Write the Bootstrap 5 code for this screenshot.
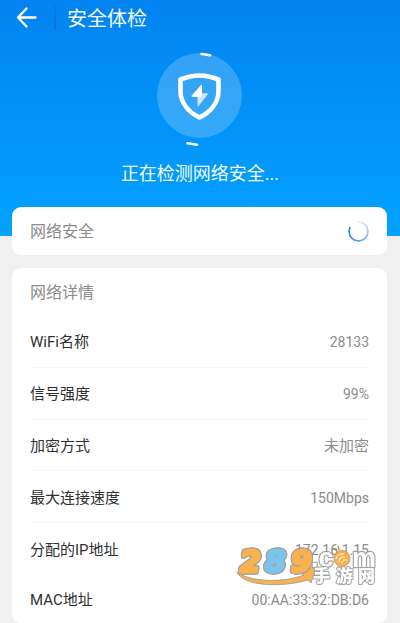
<!DOCTYPE html>
<html lang="zh-CN">
<head>
<meta charset="utf-8">
<meta name="viewport" content="width=device-width, initial-scale=1">
<title>安全体检</title>
<link href="https://cdn.jsdelivr.net/npm/bootstrap@5.3.0/dist/css/bootstrap.min.css" rel="stylesheet">
<style>
  body { font-family: Roboto, "Noto Sans CJK SC", sans-serif; background: #f0f0f0; font-size: 15px; line-height: 20px; color: #303030; }
  .hero { background: linear-gradient(#0283f1, #02a2ff); color: #f2fbff; height: 236px; }
  .topbar { height: 36px; padding-left: 16px; }
  .topbar .split { width: 2px; height: 24px; background: #0878dc; margin: 0 11px 0 17px; }
  .topbar h1 { font-size: 20px; line-height: 28px; font-weight: 400; padding-top: 2px; }
  .status { font-size: 18px; line-height: 28px; }
  .panels { padding: 0 13px 0 12px; margin-top: -29px; gap: 13px; }
  .panel { background: #fff; border-radius: 9px; padding: 0 18px; }
  .panel-title { font-size: 16px; line-height: 24px; font-weight: 400; color: #8c8c8c; height: 48px; padding-top: 2px; }
  .line { border-bottom: 1px solid #f6f6f6; padding-top: 2px; }
  .line dt { font-weight: 400; }
  .line dd { color: #8c8c8c; font-size: 14px; }
  .line dd.cn { font-size: 15px; }
  .plain { border-bottom-color: transparent; }
  .end { height: 48px; border: 0; }
  .ring { width: 21px; height: 21px; border-radius: 50%;
    background: conic-gradient(#e6f1fc 0deg, #a9cff6 80deg, #5ca2e8 180deg, #2f80d4 295deg, transparent 300deg);
    -webkit-mask: radial-gradient(circle, transparent 8px, #000 9px); mask: radial-gradient(circle, transparent 8px, #000 9px); }
  .stamp { right: 22px; bottom: 37px; pointer-events: none; overflow: visible; opacity: .9; }
</style>
<script src="https://cdn.jsdelivr.net/npm/bootstrap@5.3.0/dist/js/bootstrap.bundle.min.js"></script>
</head>
<body>
<div class="d-flex flex-column min-vh-100 position-relative">
  <header class="hero flex-shrink-0">
    <div class="topbar d-flex align-items-center">
      <button type="button" class="btn p-0 border-0 d-flex" aria-label="返回">
        <svg width="21" height="22" viewBox="0 0 21 22" fill="none" stroke="#fff" stroke-width="2.300" stroke-linecap="round" stroke-linejoin="round"><path d="M10.500 1.500 L2 10.500 L10.500 19.500 M2.500 10.500 H19.500"/></svg>
      </button>
      <span class="split"></span>
      <h1 class="m-0">安全体检</h1>
    </div>
    <div class="text-center">
      <svg class="d-block mx-auto" width="120" height="124" viewBox="0 0 120 124" fill="none" aria-hidden="true">
        <circle cx="59.500" cy="59.500" r="42.500" fill="#fff" fill-opacity=".2"/>
        <path d="M59.500 39.500 C66.500 39.500 72 41 78.500 43.500 V55 C78.500 67.500 69.500 76.500 59.500 81.500 C49.500 76.500 40.500 67.500 40.500 55 V43.500 C47 41 52.500 39.500 59.500 39.500 Z" stroke="#fff" stroke-width="4.600" stroke-linejoin="round"/>
        <path d="M61.500 49 L52 59.800 Q51.600 60.500 52.500 60.500 H61.500 Z" fill="#fff" stroke="#fff" stroke-linejoin="round"/>
        <path d="M57.500 61 V69.500 Q57.500 71 58.700 69.800 L67.700 58.400 Q68.300 57.300 67 57.300 H62 V61 Z" fill="#cfe7ff"/>
        <path d="M61.500 18 L70 19.200 M47.500 107.300 L57 108.800" stroke="#fff" stroke-width="2.600" stroke-linecap="round"/>
      </svg>
      <p class="status m-0">正在检测网络安全...</p>
    </div>
  </header>

  <main class="panels d-flex flex-column flex-grow-1">
    <section class="panel d-flex align-items-center justify-content-between">
      <h2 class="panel-title m-0 d-flex align-items-center">网络安全</h2>
      <span class="ring" role="status" aria-label="检测中"></span>
    </section>
    <section class="panel d-flex flex-column flex-grow-1">
      <h2 class="panel-title m-0 d-flex align-items-center">网络详情</h2>
      <dl class="m-0 d-flex flex-column flex-grow-1">
        <div class="line d-flex flex-fill align-items-center justify-content-between"><dt>WiFi名称</dt><dd class="m-0">28133</dd></div>
        <div class="line d-flex flex-fill align-items-center justify-content-between"><dt>信号强度</dt><dd class="m-0">99%</dd></div>
        <div class="line d-flex flex-fill align-items-center justify-content-between"><dt>加密方式</dt><dd class="m-0 cn">未加密</dd></div>
        <div class="line d-flex flex-fill align-items-center justify-content-between"><dt>最大连接速度</dt><dd class="m-0">150Mbps</dd></div>
        <div class="line plain d-flex flex-fill align-items-center justify-content-between"><dt>分配的IP地址</dt><dd class="m-0">172.16.1.15</dd></div>
        <div class="line end d-flex align-items-center justify-content-between"><dt>MAC地址</dt><dd class="m-0">00:AA:33:32:DB:D6</dd></div>
      </dl>
    </section>
  </main>

  <svg class="stamp position-absolute" width="144" height="42" viewBox="0 0 144 42" aria-label="289.com 手游网">
    <g stroke-linejoin="round">
      <path d="M3 28 C14 37 46 40 70 31 L66 29 L83 21 L77 39 L74 36 C46 44 9 42 3 28 Z" fill="#fbaa3a" stroke="#999" stroke-width="1"/>
      <g font-family="DejaVu Sans" font-weight="700" font-style="oblique" font-size="30" stroke-width="3" style="filter: drop-shadow(1px 0 #999) drop-shadow(-1px 0 #999) drop-shadow(0 1px #999) drop-shadow(0 -1px #999)">
        <text x="6" y="28" fill="#fbaa3a" stroke="#fbaa3a">2</text>
        <text x="31" y="28" fill="#6dbfea" stroke="#6dbfea">8</text>
        <text x="57" y="28" fill="#fbaa3a" stroke="#fbaa3a">9</text>
      </g>
      <g font-family="Liberation Sans" font-weight="700" font-size="27" fill="#fff" stroke="#999" stroke-width="2.400" paint-order="stroke">
        <text x="77" y="23">.c</text>
        <text x="118" y="23">m</text>
      </g>
      <circle cx="108" cy="14.500" r="8" fill="#fbaa3a" stroke="#b99a68" stroke-width="1"/>
      <path d="M99 4 L103 7 M104 2 L105 6" stroke="#c08b3e" stroke-width="1.500"/>
      <path d="M102 15 Q103 9 110 10 M105 18 Q105 12 111 13 M108 19 Q108 15 113 16" fill="none" stroke="#fff" stroke-width="1"/>
      <g font-family="Noto Sans CJK SC" font-weight="900" font-size="17" fill="#fff" stroke="#999" stroke-width="2" paint-order="stroke">
        <text x="79" y="38">手</text>
        <text x="102" y="38">游</text>
        <text x="124" y="38">网</text>
      </g>
    </g>
  </svg>
</div>
</body>
</html>
